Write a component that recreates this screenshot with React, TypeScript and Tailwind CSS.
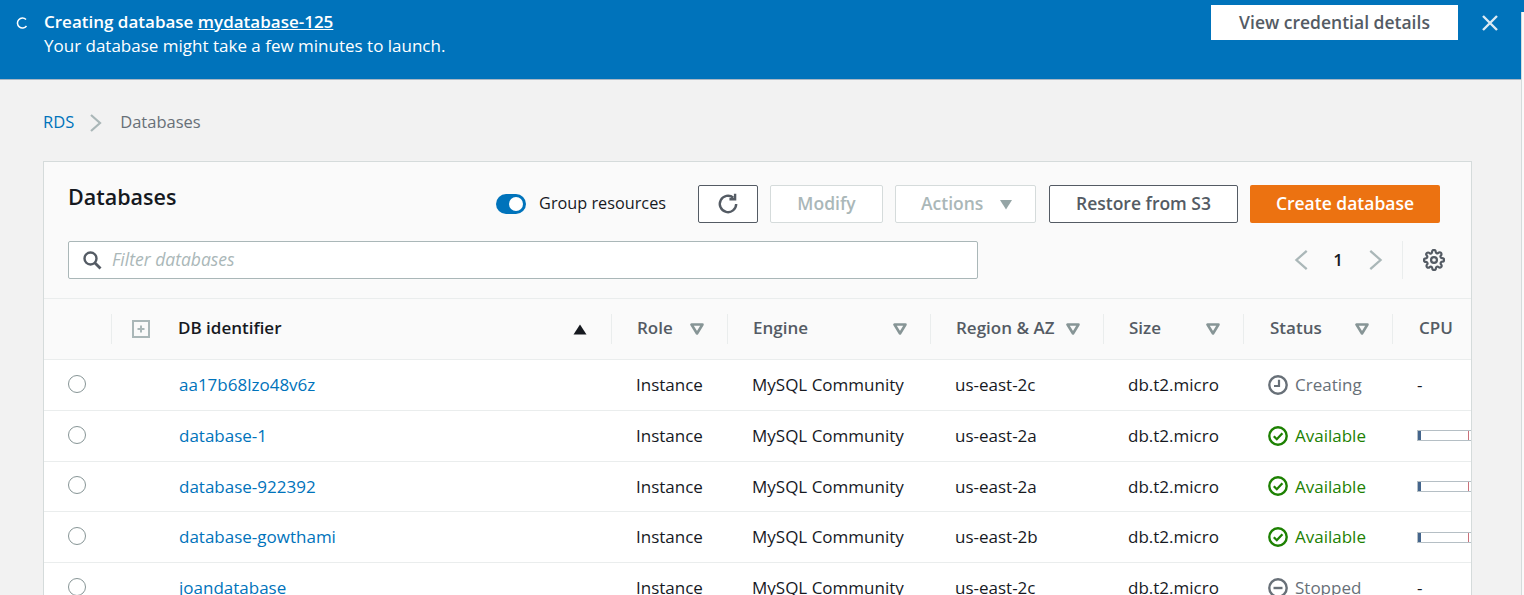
const FONT = "font-['Open_Sans','Noto_Sans',sans-serif]"
const GRID = 'grid grid-cols-[67px_500px_116px_203px_173px_140px_149px_79px]'

type Status = 'creating' | 'available' | 'stopped'

const ROWS: { id: string; region: string; status: Status }[] = [
  { id: 'aa17b68lzo48v6z', region: 'us-east-2c', status: 'creating' },
  { id: 'database-1', region: 'us-east-2a', status: 'available' },
  { id: 'database-922392', region: 'us-east-2a', status: 'available' },
  { id: 'database-gowthami', region: 'us-east-2b', status: 'available' },
  { id: 'joandatabase', region: 'us-east-2c', status: 'stopped' },
]

function FilterCaret() {
  return (
    <svg width="14" height="12" viewBox="0 0 14 12" className="shrink-0">
      <path d="M1.5 1.5h11L7 10.5z" fill="none" stroke="#879596" strokeWidth="2.6" strokeLinejoin="round" />
    </svg>
  )
}

function StatusCell({ status }: { status: Status }) {
  if (status === 'available') {
    return (
      <div className="flex items-center gap-[7px] text-[#1d8102]">
        <svg width="20" height="20" viewBox="0 0 20 20" className="shrink-0">
          <circle cx="10" cy="10" r="8.7" fill="none" stroke="currentColor" strokeWidth="2.4" />
          <path d="M5.8 10.2l3 3 5.6-6" fill="none" stroke="currentColor" strokeWidth="2.3" />
        </svg>
        Available
      </div>
    )
  }
  return (
    <div className="flex items-center gap-[7px] text-[#687078]">
      <svg width="20" height="20" viewBox="0 0 20 20" className="shrink-0">
        <circle cx="10" cy="10" r="8.7" fill="none" stroke="currentColor" strokeWidth="2.4" />
        {status === 'creating' ? (
          <path d="M11 4.8V11H6" fill="none" stroke="currentColor" strokeWidth="2.2" />
        ) : (
          <path d="M5.5 10h9" fill="none" stroke="currentColor" strokeWidth="2.4" />
        )}
      </svg>
      {status === 'creating' ? 'Creating' : 'Stopped'}
    </div>
  )
}

function CpuBar() {
  return (
    <div className="flex h-[11px] w-[60px] items-stretch border-y border-l border-[#b5bfc5] bg-white">
      <div className="w-[3px] bg-[#44658c]" />
      <div className="ml-[47px] w-[1px] bg-[#c9707a]" />
    </div>
  )
}

function HeaderCell({ label, pl = 'pl-[25px]' }: { label: string; pl?: string }) {
  return (
    <div className="flex h-[60px] items-center">
      <div className={`flex h-[30px] w-full items-center justify-between border-l border-[#eaeded] pr-[23px] ${pl}`}>
        <span className="whitespace-nowrap pb-[2px] text-[17px] font-semibold text-[#545b64]">{label}</span>
        <FilterCaret />
      </div>
    </div>
  )
}

export default function App() {
  return (
    <div className={`relative h-[595px] w-full overflow-hidden bg-[#f2f2f2] ${FONT}`}>
      <div className="flex h-[80px] items-start justify-between border-b border-[#a9b7c4] bg-[#0073bb] text-white">
        <div className="flex pl-[16px] pt-[10px]">
          <svg width="12" height="12" viewBox="0 0 12 12" className="mt-[7px] shrink-0">
            <path d="M10 2.5A5 5 0 1 0 10.5 9" fill="none" stroke="white" strokeWidth="1.5" />
          </svg>
          <div className="ml-[16px] text-[17px] leading-[24px]">
            <div className="font-semibold">
              Creating database <span className="underline">mydatabase-125</span>
            </div>
            <div>Your database might take a few minutes to launch.</div>
          </div>
        </div>
        <div className="flex items-start pt-[5px]">
          <button className="h-[35px] w-[247px] bg-white text-[17.5px] font-semibold text-[#545b64]">View credential details</button>
          <svg width="18" height="18" viewBox="0 0 18 18" className="ml-[23px] mr-[25px] mt-[9px]">
            <path d="M2 2l14 14M16 2L2 16" stroke="#dbe9f3" strokeWidth="2.4" fill="none" />
          </svg>
        </div>
      </div>

      <div className="flex h-[81px] items-center pl-[43px] pt-[4px] text-[16.5px]">
        <span className="text-[#0073bb]">RDS</span>
        <svg width="14" height="20" viewBox="0 0 14 20" className="ml-[15px] mr-[17px]">
          <path d="M2 2l9 8-9 8" fill="none" stroke="#aab7b8" strokeWidth="2.2" />
        </svg>
        <span className="text-[#687078]">Databases</span>
      </div>

      <div className="ml-[43px] w-[1429px] overflow-hidden border-x border-t border-[#d5dbdb] bg-white">
        <div className="h-[137px] border-b border-[#eaeded] bg-[#fafafa]">
          <div className="flex h-[79px] items-start pl-[24px] pt-[21px]">
            <h1 className="text-[21.5px] font-semibold leading-[28px] text-[#16191f]">Databases</h1>
            <div className="ml-auto mt-[2px] flex items-center pr-[31px]">
              <div className="flex h-[20px] w-[30px] items-center justify-end rounded-full bg-[#0073bb] pr-[3px]">
                <div className="size-[14px] rounded-full bg-white" />
              </div>
              <span className="ml-[13px] pb-[2px] text-[16.25px] text-[#16191f]">Group resources</span>
              <button className="ml-[32px] flex h-[38px] w-[60px] items-center justify-center rounded-[2px] border border-[#545b64] bg-white">
                <svg width="24" height="24" viewBox="0 0 22 22">
                  <path d="M18.5 11a7.5 7.5 0 1 1-2.6-5.7" fill="none" stroke="#545b64" strokeWidth="2.2" />
                  <path d="M17.5 1.5v5.2h-5.2" fill="none" stroke="#545b64" strokeWidth="2.2" />
                </svg>
              </button>
              <button className="ml-[12px] h-[38px] w-[113px] rounded-[2px] border border-[#d5dbdb] bg-white pb-[2px] text-[17.5px] font-semibold text-[#aab7b8]">Modify</button>
              <button className="ml-[12px] flex h-[38px] w-[141px] items-center justify-between rounded-[2px] border border-[#d5dbdb] bg-white pb-[2px] pl-[25px] pr-[22px] text-[17.5px] font-semibold text-[#aab7b8]">
                Actions
                <svg width="14" height="11" viewBox="0 0 14 11" className="mt-[2px]">
                  <path d="M1 1h12L7 10.5z" fill="#95a5a6" />
                </svg>
              </button>
              <button className="ml-[13px] h-[38px] w-[189px] rounded-[2px] border border-[#545b64] bg-white pb-[2px] text-[17.5px] font-semibold text-[#545b64]">Restore from S3</button>
              <button className="ml-[12px] h-[38px] w-[190px] rounded-[2px] bg-[#ec7211] pb-[2px] text-[17.5px] font-semibold text-white">Create database</button>
            </div>
          </div>
          <div className="flex items-center pl-[24px]">
            <div className="flex h-[38px] w-[910px] items-center rounded-[2px] border border-[#aab7b8] bg-white pl-[13px]">
              <svg width="20" height="20" viewBox="0 0 20 20" className="shrink-0">
                <circle cx="8.5" cy="8.5" r="6" fill="none" stroke="#545b64" strokeWidth="2.4" />
                <path d="M13 13l5.5 5.5" stroke="#545b64" strokeWidth="2.8" fill="none" />
              </svg>
              <span className="ml-[10px] pb-[2px] text-[17.5px] italic text-[#aab7b8]">Filter databases</span>
            </div>
            <div className="ml-auto flex h-[38px] items-center">
              <svg width="16" height="24" viewBox="0 0 14 20">
                <path d="M12 2L3 10l9 8" fill="none" stroke="#aab7b8" strokeWidth="2" />
              </svg>
              <span className="ml-[24px] mr-[25px] pb-[1px] text-[17px] font-semibold text-[#16191f]">1</span>
              <svg width="16" height="24" viewBox="0 0 14 20">
                <path d="M2 2l9 8-9 8" fill="none" stroke="#aab7b8" strokeWidth="2" />
              </svg>
              <div className="ml-[18px] h-[38px] w-px bg-[#eaeded]" />
              <svg width="22" height="22" viewBox="0 0 24 24" className="ml-[20px] mr-[26px]" fill="none" stroke="#545b64" strokeWidth="2.4" strokeLinejoin="round">
                <circle cx="12" cy="12" r="3.2" />
                <path d="M19.4 15a1.65 1.65 0 0 0 .33 1.82l.06.06a2 2 0 1 1-2.83 2.83l-.06-.06a1.65 1.65 0 0 0-2.8 1.17V21a2 2 0 1 1-4 0v-.09a1.65 1.65 0 0 0-2.8-1.16l-.06.06a2 2 0 1 1-2.83-2.83l.06-.06a1.65 1.65 0 0 0-1.17-2.8H3a2 2 0 1 1 0-4h.09a1.65 1.65 0 0 0 1.16-2.8l-.06-.06a2 2 0 1 1 2.83-2.83l.06.06a1.65 1.65 0 0 0 2.8-1.17V3a2 2 0 1 1 4 0v.09a1.65 1.65 0 0 0 2.8 1.16l.06-.06a2 2 0 1 1 2.83 2.83l-.06.06a1.65 1.65 0 0 0 1.17 2.8H21a2 2 0 1 1 0 4h-.09a1.65 1.65 0 0 0-1.51 1z" />
              </svg>
            </div>
          </div>
        </div>

        <div className={`${GRID} border-b border-[#eaeded] bg-[#fafafa]`}>
          <div />
          <div className="flex h-[60px] items-center">
            <div className="flex h-[30px] w-full items-center border-l border-[#eaeded] pl-[20px] pr-[24px]">
              <svg width="18" height="18" viewBox="0 0 18 18" className="shrink-0">
                <rect x="1" y="1" width="16" height="16" fill="none" stroke="#aab7b8" strokeWidth="2" />
                <path d="M5.5 9h7M9 5.5v7" stroke="#aab7b8" strokeWidth="2" fill="none" />
              </svg>
              <span className="ml-[28px] pb-[2px] text-[17px] font-semibold text-[#16191f]">DB identifier</span>
              <svg width="14" height="11" viewBox="0 0 14 11" className="ml-auto">
                <path d="M7 .5l6.5 10H.5z" fill="#16191f" />
              </svg>
            </div>
          </div>
          <HeaderCell label="Role" />
          <HeaderCell label="Engine" />
          <HeaderCell label="Region & AZ" />
          <HeaderCell label="Size" />
          <HeaderCell label="Status" pl="pl-[26px]" />
          <div className="flex h-[60px] items-center">
            <div className="flex h-[30px] w-full items-center border-l border-[#eaeded] pl-[26px]">
              <span className="pb-[2px] text-[17px] font-semibold text-[#545b64]">CPU</span>
            </div>
          </div>
        </div>

        {ROWS.map((row) => (
          <div key={row.id} className={`${GRID} h-[50.75px] items-center border-b border-[#eaeded] text-[17px] text-[#16191f]`}>
            <div className="pb-[2px] pl-[24px]">
              <div className="size-[18px] rounded-full border border-[#879596] bg-white" />
            </div>
            <span className="pl-[68px] text-[#0073bb]">{row.id}</span>
            <span className="pl-[25px]">Instance</span>
            <span className="whitespace-nowrap pl-[25px]">MySQL Community</span>
            <span className="pl-[25px]">{row.region}</span>
            <span className="pl-[25px]">db.t2.micro</span>
            <div className="pl-[25px]">
              <StatusCell status={row.status} />
            </div>
            <div className="pl-[25px]">{row.status === 'available' ? <CpuBar /> : '-'}</div>
          </div>
        ))}
      </div>

      <div className="absolute bottom-0 right-0 top-[12px] w-[3px] border-l border-[#d5dbdb] bg-[#fafafa]" />
    </div>
  )
}
